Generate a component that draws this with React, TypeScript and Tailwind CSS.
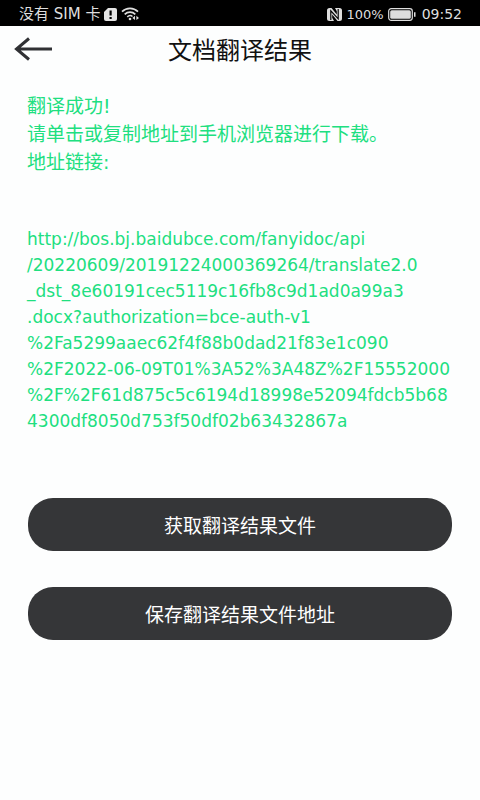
const linkLines = [
  "http://bos.bj.baidubce.com/fanyidoc/api",
  "/20220609/20191224000369264/translate2.0",
  "_dst_8e60191cec5119c16fb8c9d1ad0a99a3",
  ".docx?authorization=bce-auth-v1",
  "%2Fa5299aaec62f4f88b0dad21f83e1c090",
  "%2F2022-06-09T01%3A52%3A48Z%2F15552000",
  "%2F%2F61d875c5c6194d18998e52094fdcb5b68",
  "4300df8050d753f50df02b63432867a",
];

function StatusBar() {
  return (
    <div className="flex h-[26px] items-center justify-between bg-black pt-0.5 pl-[19px] pr-[18px] text-[14px] leading-none text-[#dedede]">
      <div className="flex items-center gap-1">
        <span className="text-[15px]">没有 SIM 卡</span>
        {/* SIM card warning */}
        <svg className="h-[13px] w-[13px]" viewBox="0 0 13 13" aria-hidden="true">
          <path d="M4 0h7a2 2 0 0 1 2 2v9a2 2 0 0 1-2 2H2a2 2 0 0 1-2-2V4z" fill="#e4e4e4" />
          <path d="M5.5 2.5h2.2v5H5.5zM5.5 9h2.2v2H5.5z" fill="#000" />
        </svg>
        {/* Wifi */}
        <svg className="h-[14px] w-[19px]" viewBox="0 0 19 14" fill="none" stroke="#dedede" aria-hidden="true">
          <path d="M1 4.6C5.5 .2 12.5 .2 17 4.6" strokeWidth="1.7" />
          <path d="M3.7 7.3c3-3 7.6-3 10.6 0" strokeWidth="1.7" />
          <path d="M6.3 9.8c1.6-1.5 3.8-1.5 5.2-.3" strokeWidth="1.6" />
          <circle cx="9" cy="12" r="1.3" fill="#dedede" stroke="none" />
          <path d="M14 8.8v4.2l-2.6-2.1zM15.4 8.8v4.2l2.6-2.1z" fill="#dedede" stroke="none" />
        </svg>
      </div>
      <div className="flex items-center">
        {/* NFC */}
        <svg className="mr-1 h-[13px] w-[15px]" viewBox="0 0 15 13" aria-hidden="true">
          <path d="M3 0h1.5l5.3 6.5V3.2L8 0h4.5A2.5 2.5 0 0 1 15 2.5v8a2.5 2.5 0 0 1-2.5 2.5h-2L5.2 6.4v3.4L7 13H2.500A2.500 2.500 0 0 1 0 10.500v-8A2.500 2.500 0 0 1 2.500 0z" fill="#dedede" />
          <path d="M3.8 12V2.800l7.400 8V1" fill="none" stroke="#000" strokeWidth="1.2" />
        </svg>
        <span className="text-[13px]">100%</span>
        {/* Battery */}
        <svg className="ml-1 mr-1.5 h-[13px] w-[28px]" viewBox="0 0 28 13" aria-hidden="true">
          <rect x=".7" y=".7" width="23.6" height="11.6" rx="2.5" fill="none" stroke="#dedede" strokeWidth="1.2" />
          <rect x="2.2" y="2.2" width="20.6" height="8.6" rx="1.5" fill="#dedede" />
          <path d="M26 4.3h1.5v4.4H26z" fill="#dedede" />
        </svg>
        <span>09:52</span>
      </div>
    </div>
  );
}

export default function App() {
  return (
    <div className="min-h-screen bg-[#fdfefe] font-['DejaVu_Sans','Noto_Sans_CJK_SC',sans-serif]">
      <StatusBar />

      <header className="grid h-[46px] grid-cols-[56px_1fr_56px] items-center">
        <button type="button" aria-label="返回" className="flex h-full items-center pl-[14px]">
          <svg className="h-6 w-[38px] shrink-0" viewBox="0 0 38 24" fill="none" stroke="#303134" strokeWidth="3" aria-hidden="true">
            <path d="M38 12H3M15 1.5L2.5 12L15 22.5" />
          </svg>
        </button>
        <h1 className="pt-1 text-center text-[24px] leading-8 text-[#111111]">文档翻译结果</h1>
      </header>

      <main className="px-7 pt-5">
        <div className="-ml-px text-[#20df80]">
          <div className="text-[19px] leading-7 whitespace-nowrap">
            <p>翻译成功!</p>
            <p>请单击或复制地址到手机浏览器进行下载。</p>
            <p>地址链接:</p>
          </div>
          <a href="#download" className="mt-[50px] block text-[17px] leading-[26px] whitespace-nowrap">
            {linkLines.map((line) => (
              <span key={line} className="block">{line}</span>
            ))}
          </a>
        </div>

        <div className="mt-16 flex flex-col gap-9 pb-10">
          <button type="button" className="h-[53px] w-full rounded-[25px] bg-[#353638] pt-1 text-[19px] text-white">
            获取翻译结果文件
          </button>
          <button type="button" className="h-[53px] w-full rounded-[25px] bg-[#353638] pt-1 text-[19px] text-white">
            保存翻译结果文件地址
          </button>
        </div>
      </main>
    </div>
  );
}
